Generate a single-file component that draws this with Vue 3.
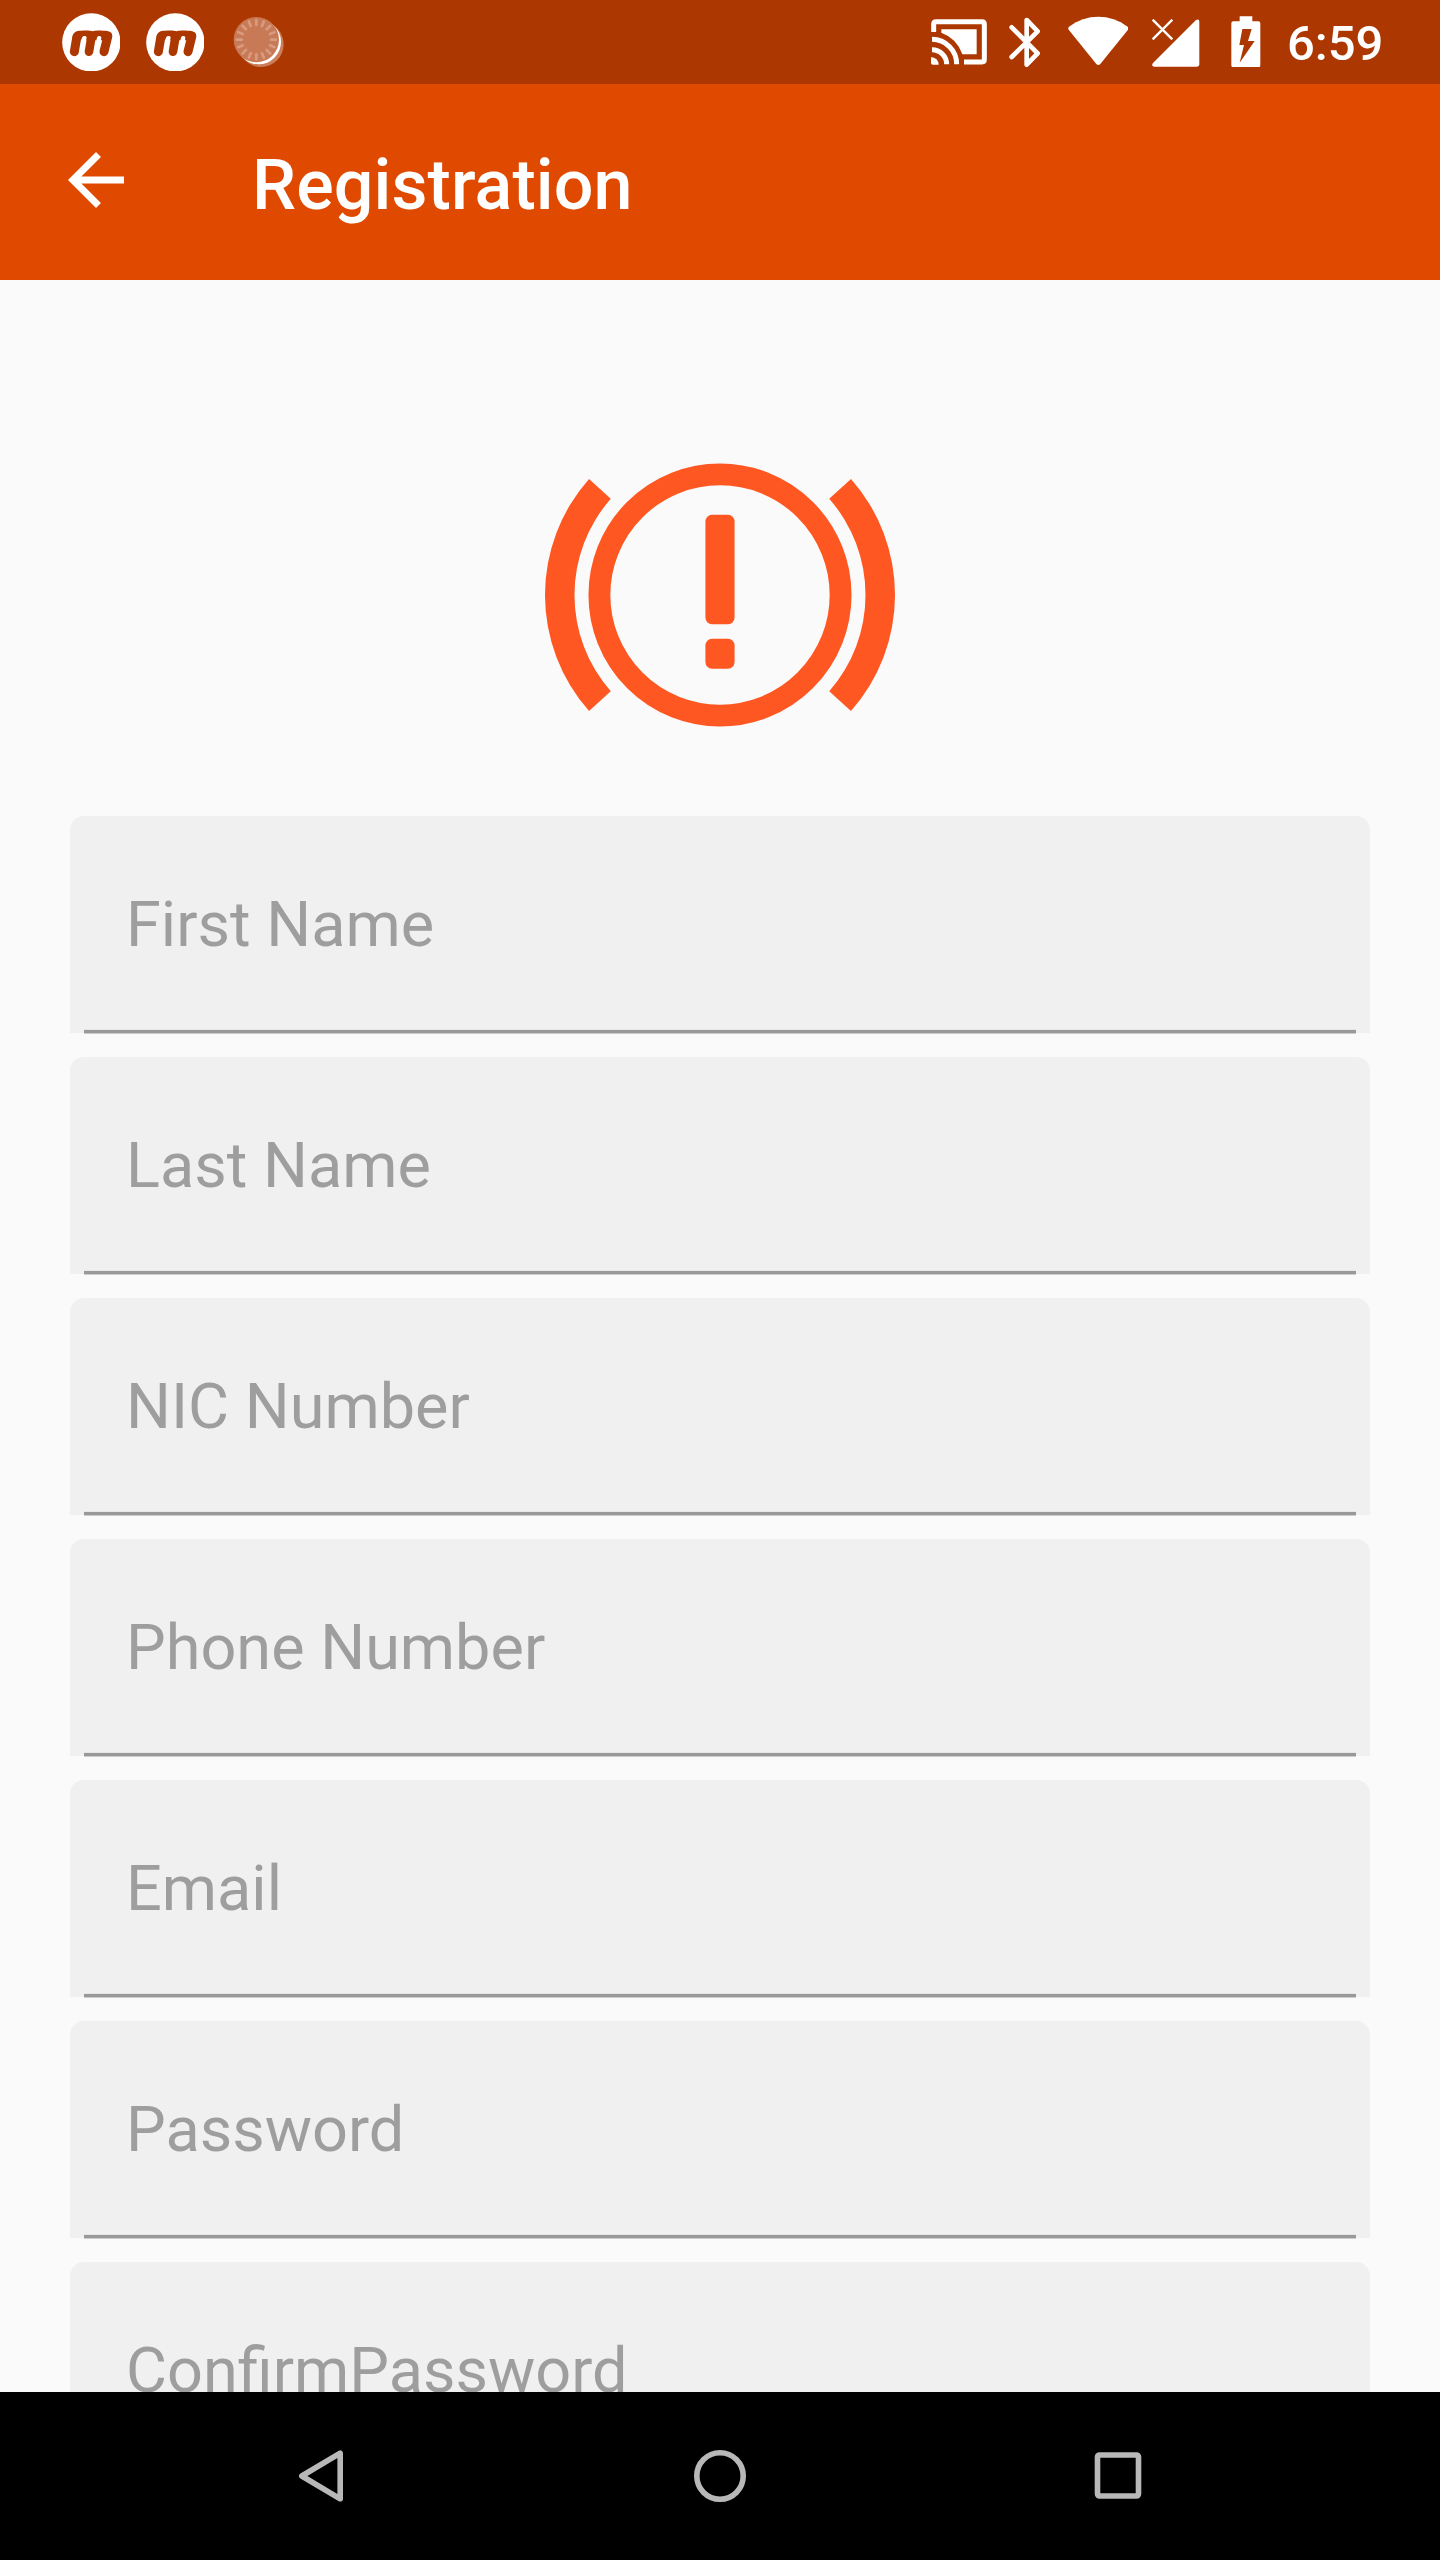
<script setup>
const fields = [
  'First Name',
  'Last Name',
  'NIC Number',
  'Phone Number',
  'Email',
  'Password',
  'ConfirmPassword',
]
const ticks = Array.from({ length: 16 }, (_, i) => i * 22.5)
</script>

<template>
  <div class="screen">
    <header class="status">
      <div class="notifications">
        <svg v-for="n in 2" :key="n" class="badge" viewBox="65 38 176 176">
          <circle cx="153" cy="126" r="87.5" fill="#fff" />
          <g stroke="#ad3700" fill="#ad3700" stroke-linecap="round">
            <path d="M97 112C98 96 106 91 122 91C139 90 148 90 158 93C166 90 178 91 190 91C207 91 217 95 216 109L210 120L182 120L183 112C183 105 171 105 170 112L168 120L138 120L139 112C139 105 127 105 125 112L122 120L95 120Z" stroke="none" />
            <path d="M109.500 110L102 154" stroke-width="27" />
            <path d="M153 112L146 154" stroke-width="26" />
            <path d="M202 110L191 154" stroke-width="27" />
          </g>
        </svg>
        <svg class="spinner" viewBox="580 48 156 156">
          <circle cx="664" cy="133" r="68" fill="#cb7e5a" />
          <circle cx="657" cy="126" r="67" fill="#fff" />
          <circle cx="650" cy="119" r="68" fill="#c87955" />
          <g stroke="#d79c80" stroke-width="8" stroke-linecap="round">
            <path v-for="a in ticks" :key="a" d="M650 60V75" :transform="`rotate(${a} 650 119)`" />
          </g>
        </svg>
      </div>
      <div class="system">
        <svg class="cast" viewBox="63 57 168 138">
          <g fill="none" stroke="#fff">
            <path d="M71 96V72Q71 65 78 65H216Q223 65 223 72V178Q223 186 216 186H162" stroke-width="15" />
            <path d="M66 149A44 44 0 0 1 110 193" stroke-width="15" />
            <path d="M66 118A74 74 0 0 1 140 193" stroke-width="15" />
          </g>
          <path d="M63 172A22 22 0 0 1 86 194H69Q63 194 63 188Z" fill="#fff" />
          <path d="M94 88H200V163H157A104 104 0 0 0 94 98Z" fill="#fff" />
        </svg>
        <svg class="bluetooth" viewBox="296 50 96 151">
          <path d="M304 81L382 159L349 193V59L382 93L304 170" fill="none" stroke="#fff" stroke-width="14" stroke-linecap="round" stroke-linejoin="round" />
        </svg>
        <svg class="wifi" viewBox="473 49 182 149">
          <path d="M476 81C503 61 533 51 564 51C595 51 625 61 652 81Q656 85 653 90L570 193Q564 199 558 193L475 90Q472 85 476 81Z" fill="#fff" />
        </svg>
        <svg class="signal" viewBox="65 58 143 144">
          <path d="M67 60L126 119M126 60L67 119" stroke="#fff" stroke-width="7" />
          <path d="M68 190L197 61Q207 56 207 66V194Q207 201 200 201H71Q62 199 68 190Z" fill="#fff" />
        </svg>
        <svg class="battery" viewBox="302 47 89 155">
          <path fill-rule="evenodd" d="M328 48H366V63H384Q390 63 390 69V195Q390 201 384 201H309Q303 201 303 195V69Q303 63 309 63H328ZM336 86L327 134H341L328 187L373 122H353L364 86Z" fill="#fff" />
        </svg>
        <span class="clock">6:59</span>
      </div>
    </header>

    <div class="appbar">
      <svg class="back" viewBox="0 0 24 24">
        <path d="M20 11H7.830l5.590-5.590L12 4l-8 8 8 8 1.410-1.410L7.830 13H20v-2z" fill="#fff" />
      </svg>
      <h1>Registration</h1>
    </div>

    <main>
      <svg class="logo" viewBox="0 0 24 24">
        <circle cx="12" cy="12" r="8.270" fill="none" stroke="#ff5722" stroke-width="1.500" />
        <path d="M3.020 4.040A12 12 0 0 0 3.020 19.960L4.510 18.600A10 10 0 0 1 4.510 5.400ZM20.980 4.040A12 12 0 0 1 20.980 19.960L19.490 18.600A10 10 0 0 0 19.490 5.400Z" fill="#ff5722" />
        <rect x="11" y="6.500" width="2" height="7.500" rx="0.450" fill="#ff5722" />
        <rect x="11" y="15" width="2" height="2.050" rx="0.450" fill="#ff5722" />
      </svg>
      <form class="fields">
        <label v-for="f in fields" :key="f" class="field"><span>{{ f }}</span></label>
      </form>
    </main>

    <nav>
      <svg class="nav-icon" viewBox="0 0 60 60">
        <path d="M48.200 7.200V52.800L9.800 30Z" />
      </svg>
      <svg class="nav-icon" viewBox="0 0 60 60">
        <circle cx="30" cy="30" r="23.200" />
      </svg>
      <svg class="nav-icon" viewBox="0 0 60 60">
        <rect x="9.500" y="9" width="41" height="41" rx="2" />
      </svg>
    </nav>
  </div>
</template>

<style>
body {
  margin: 0;
}
</style>

<style scoped>
.screen {
  width: 1440px;
  height: 2560px;
  display: flex;
  flex-direction: column;
  overflow: hidden;
  background: #fafafa;
  font-family: Roboto, sans-serif;
}
svg {
  display: block;
  flex: none;
}
.status {
  flex: none;
  height: 84px;
  display: flex;
  justify-content: space-between;
  background: #ad3700;
  color: #fff;
}
.notifications,
.system {
  display: flex;
  align-items: flex-start;
}
.notifications {
  padding-left: 61.67px;
}
.badge {
  width: 58.67px;
  height: 58.67px;
  margin: 12.67px 25.33px 0 0;
}
.spinner {
  width: 52px;
  height: 52px;
  margin: 16px 0 0 3.670px;
}
.system {
  width: 509px;
}
.cast {
  width: 56px;
  height: 46px;
  margin-top: 19px;
}
.bluetooth {
  width: 32px;
  height: 50.33px;
  margin: 16.67px 0 0 21.67px;
}
.wifi {
  width: 60.67px;
  height: 49.67px;
  margin: 16.33px 0 0 27px;
}
.signal {
  width: 47.67px;
  height: 48px;
  margin: 19.33px 0 0 24px;
}
.battery {
  width: 29.67px;
  height: 51.67px;
  margin: 15.67px 0 0 31.33px;
}
.clock {
  margin: 15px 0 0 26px;
  font-size: 49px;
  line-height: 58px;
  font-weight: 500;
}
.appbar {
  flex: none;
  height: 196px;
  display: flex;
  background: #df4a00;
  color: #fff;
}
.back {
  width: 84px;
  height: 84px;
  margin: 54px 0 0 54px;
}
h1 {
  margin: 60px 0 0 114px;
  font-size: 70px;
  line-height: 82px;
  font-weight: 500;
  letter-spacing: 0.1px;
}
main {
  flex: 1;
  min-height: 0;
  overflow: hidden;
}
.logo {
  width: 350px;
  height: 350px;
  margin: 140px auto 46px;
}
.fields {
  display: flex;
  flex-direction: column;
  gap: 24px;
  padding: 0 70px;
}
.field {
  flex: none;
  box-sizing: border-box;
  height: 217px;
  display: flex;
  flex-direction: column;
  justify-content: space-between;
  padding: 72px 14px 0;
  border-radius: 14px 14px 0 0;
  background: #f0f0f0;
  color: #9e9e9e;
  font-size: 63px;
  line-height: 74px;
}
.field span {
  padding-left: 42px;
}
.field::after {
  content: '';
  height: 3px;
  background: #999;
  box-shadow: 0 1px #ccc, 0 -1px #e6e6e6;
}
nav {
  flex: none;
  height: 168px;
  display: flex;
  align-items: center;
  justify-content: center;
  gap: 338px;
  background: #000;
}
.nav-icon {
  width: 60px;
  height: 60px;
  fill: none;
  stroke: #b8b8b8;
  stroke-width: 5.600;
  stroke-linejoin: round;
}
</style>
